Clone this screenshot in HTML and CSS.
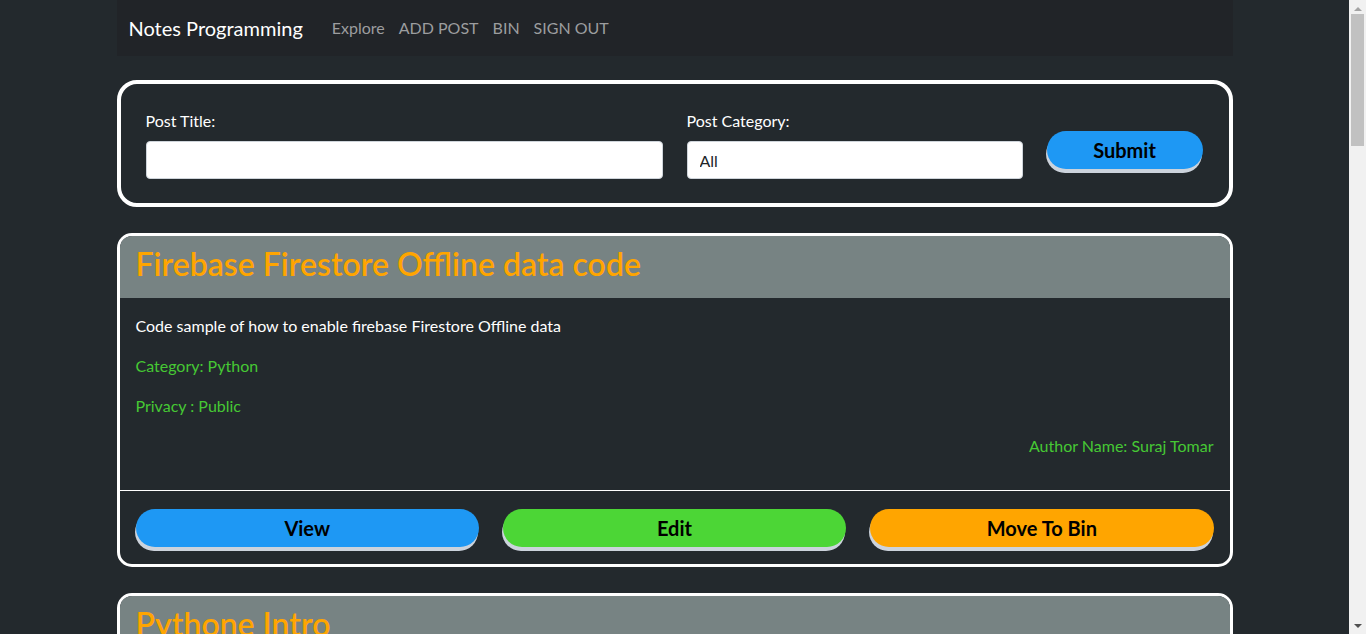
FILE: index.html
```html
<!DOCTYPE html>
<html lang="en">
<head>
<meta charset="utf-8">
<title>Notes Programming</title>
<link rel="stylesheet" href="styles.css">
</head>
<body>
<div class="container">
  <nav class="navbar">
    <a class="brand" href="#">Notes Programming</a>
    <ul class="nav">
      <li><a class="nav-link" href="#">Explore</a></li>
      <li><a class="nav-link" href="#">ADD POST</a></li>
      <li><a class="nav-link" href="#">BIN</a></li>
      <li><a class="nav-link" href="#">SIGN OUT</a></li>
    </ul>
  </nav>

  <form class="search-card">
    <div class="field">
      <label class="label" for="title">Post Title:</label>
      <input class="input" id="title" type="text">
    </div>
    <div class="field">
      <label class="label" for="cat">Post Category:</label>
      <input class="input" id="cat" type="text" value="All">
    </div>
    <button class="btn btn-blue btn-submit" type="button">Submit</button>
  </form>

  <div class="post-card">
    <div class="post-header"><h2 class="post-title">Firebase Firestore Offline data code</h2></div>
    <div class="post-body">
      <p class="desc">Code sample of how to enable firebase Firestore Offline data</p>
      <p class="meta">Category: Python</p>
      <p class="meta">Privacy : Public</p>
      <p class="meta author">Author Name: Suraj Tomar</p>
    </div>
    <div class="post-footer">
      <button class="btn btn-blue" type="button">View</button>
      <button class="btn btn-green" type="button">Edit</button>
      <button class="btn btn-orange" type="button">Move To Bin</button>
    </div>
  </div>

  <div class="post-card">
    <div class="post-header"><h2 class="post-title">Pythone Intro</h2></div>
    <div class="post-body">
      <p class="desc">Introduction to Python programming</p>
      <p class="meta">Category: Python</p>
      <p class="meta">Privacy : Public</p>
      <p class="meta author">Author Name: Suraj Tomar</p>
    </div>
    <div class="post-footer">
      <button class="btn btn-blue" type="button">View</button>
      <button class="btn btn-green" type="button">Edit</button>
      <button class="btn btn-orange" type="button">Move To Bin</button>
    </div>
  </div>

  <div class="post-card">
    <div class="post-header"><h2 class="post-title">Python Lists</h2></div>
    <div class="post-body">
      <p class="desc">Working with lists in Python</p>
      <p class="meta">Category: Python</p>
      <p class="meta">Privacy : Public</p>
      <p class="meta author">Author Name: Suraj Tomar</p>
    </div>
    <div class="post-footer">
      <button class="btn btn-blue" type="button">View</button>
      <button class="btn btn-green" type="button">Edit</button>
      <button class="btn btn-orange" type="button">Move To Bin</button>
    </div>
  </div>

  <div class="post-card">
    <div class="post-header"><h2 class="post-title">Python Dictionary</h2></div>
    <div class="post-body">
      <p class="desc">Working with dictionaries in Python</p>
      <p class="meta">Category: Python</p>
      <p class="meta">Privacy : Public</p>
      <p class="meta author">Author Name: Suraj Tomar</p>
    </div>
    <div class="post-footer">
      <button class="btn btn-blue" type="button">View</button>
      <button class="btn btn-green" type="button">Edit</button>
      <button class="btn btn-orange" type="button">Move To Bin</button>
    </div>
  </div>

  <div class="post-card">
    <div class="post-header"><h2 class="post-title">Python Functions</h2></div>
    <div class="post-body">
      <p class="desc">Defining functions in Python</p>
      <p class="meta">Category: Python</p>
      <p class="meta">Privacy : Public</p>
      <p class="meta author">Author Name: Suraj Tomar</p>
    </div>
    <div class="post-footer">
      <button class="btn btn-blue" type="button">View</button>
      <button class="btn btn-green" type="button">Edit</button>
      <button class="btn btn-orange" type="button">Move To Bin</button>
    </div>
  </div>

  <div class="post-card">
    <div class="post-header"><h2 class="post-title">Python Classes</h2></div>
    <div class="post-body">
      <p class="desc">Object oriented programming in Python</p>
      <p class="meta">Category: Python</p>
      <p class="meta">Privacy : Public</p>
      <p class="meta author">Author Name: Suraj Tomar</p>
    </div>
    <div class="post-footer">
      <button class="btn btn-blue" type="button">View</button>
      <button class="btn btn-green" type="button">Edit</button>
      <button class="btn btn-orange" type="button">Move To Bin</button>
    </div>
  </div>
</div>

<div class="scrollbar" aria-hidden="true">
  <div class="sb-arrow sb-up"></div>
  <div class="sb-track"><div class="sb-thumb"></div></div>
  <div class="sb-arrow sb-down"></div>
</div>
</body>
</html>
```

FILE: styles.css
```css
* {
  box-sizing: border-box;
}

body {
  margin: 0;
  padding-right: 17px;
  background: #23292d;
  color: #ffffff;
  font-family: Lato, "Noto Sans", "Open Sans", sans-serif;
  font-size: 16px;
  line-height: 24px;
}

.container {
  max-width: 1140px;
  margin: 0 auto;
  padding: 0 12px 30px;
}

/* Fake classic scrollbar (overlays the right edge) */
.scrollbar {
  position: fixed;
  top: 0;
  right: 0;
  width: 17px;
  height: 100vh;
  display: flex;
  flex-direction: column;
  background: #f1f1f1;
}
.sb-arrow {
  height: 17px;
  display: flex;
  align-items: center;
  justify-content: center;
}
.sb-up::before {
  content: "";
  border-left: 4px solid transparent;
  border-right: 4px solid transparent;
  border-bottom: 4px solid #a3a3a3;
}
.sb-down::before {
  content: "";
  border-left: 4px solid transparent;
  border-right: 4px solid transparent;
  border-top: 4px solid #505050;
}
.sb-track {
  flex: 1;
  padding: 0 2px;
}
.sb-thumb {
  height: 132px;
  margin-top: -3px;
  background: #c1c1c1;
}

/* Navbar */
.navbar {
  display: flex;
  align-items: center;
  height: 56px;
  padding: 8px 12px;
  background: #212428;
}
.brand {
  color: #ffffff;
  text-decoration: none;
  font-size: 20px;
  line-height: 30px;
  margin-right: 21px;
}
.nav {
  display: flex;
  list-style: none;
  margin: 0;
  padding: 0;
}
.nav-link {
  display: block;
  padding: 8px 7px;
  color: #9c9d9f;
  text-decoration: none;
  font-size: 16px;
  line-height: 24px;
}
.nav li:first-child .nav-link {
  padding-left: 8px;
}

/* Search form */
.search-card {
  display: grid;
  grid-template-columns: 517fr 336fr 156fr;
  align-items: end;
  gap: 24px;
  margin-top: 24px;
  margin-bottom: 26px;
  padding: 25px 26px 24px 25px;
  border: 4px solid #ffffff;
  border-radius: 20px;
}
.field {
  display: flex;
  flex-direction: column;
  min-width: 0;
}
.label {
  margin-bottom: 8px;
  font-size: 16px;
  line-height: 24px;
  color: #ffffff;
}
.input {
  width: 100%;
  height: 38px;
  padding: 6px 12px;
  border: 1px solid #ced4da;
  border-radius: 4px;
  background: #ffffff;
  color: #212529;
  font-family: inherit;
  font-size: 16px;
  line-height: 24px;
  outline: none;
}

/* Buttons */
.btn {
  height: 38px;
  border: none;
  border-radius: 20px;
  box-shadow: -1px 4px 0 #ccd3dc;
  color: #000000;
  font-family: inherit;
  font-weight: 700;
  font-size: 20px;
  line-height: 38px;
  padding: 0 12px;
  cursor: pointer;
}
.btn-blue {
  background: #1e98f4;
}
.btn-green {
  background: #4cd636;
}
.btn-orange {
  background: #ffa500;
}
.btn-submit {
  margin-bottom: 10px;
}

/* Post cards */
.post-card {
  margin-bottom: 26px;
  border: 3px solid #ffffff;
  border-radius: 15px;
  overflow: hidden;
}
.post-header {
  padding: 9px 16px 15px;
  background: #778383;
}
.post-title {
  margin: 0;
  color: #ffa500;
  font-size: 32px;
  font-weight: 600;
  line-height: 38px;
}
.post-body {
  padding: 16px;
}
.post-body p {
  margin: 0 0 16px;
}
.desc {
  color: #ffffff;
}
.meta {
  color: #46c834;
}
.author {
  text-align: right;
}
.post-footer {
  display: grid;
  grid-template-columns: repeat(3, 1fr);
  gap: 24px;
  padding: 18px 16px 17px;
  border-top: 1px solid #ffffff;
}
```
